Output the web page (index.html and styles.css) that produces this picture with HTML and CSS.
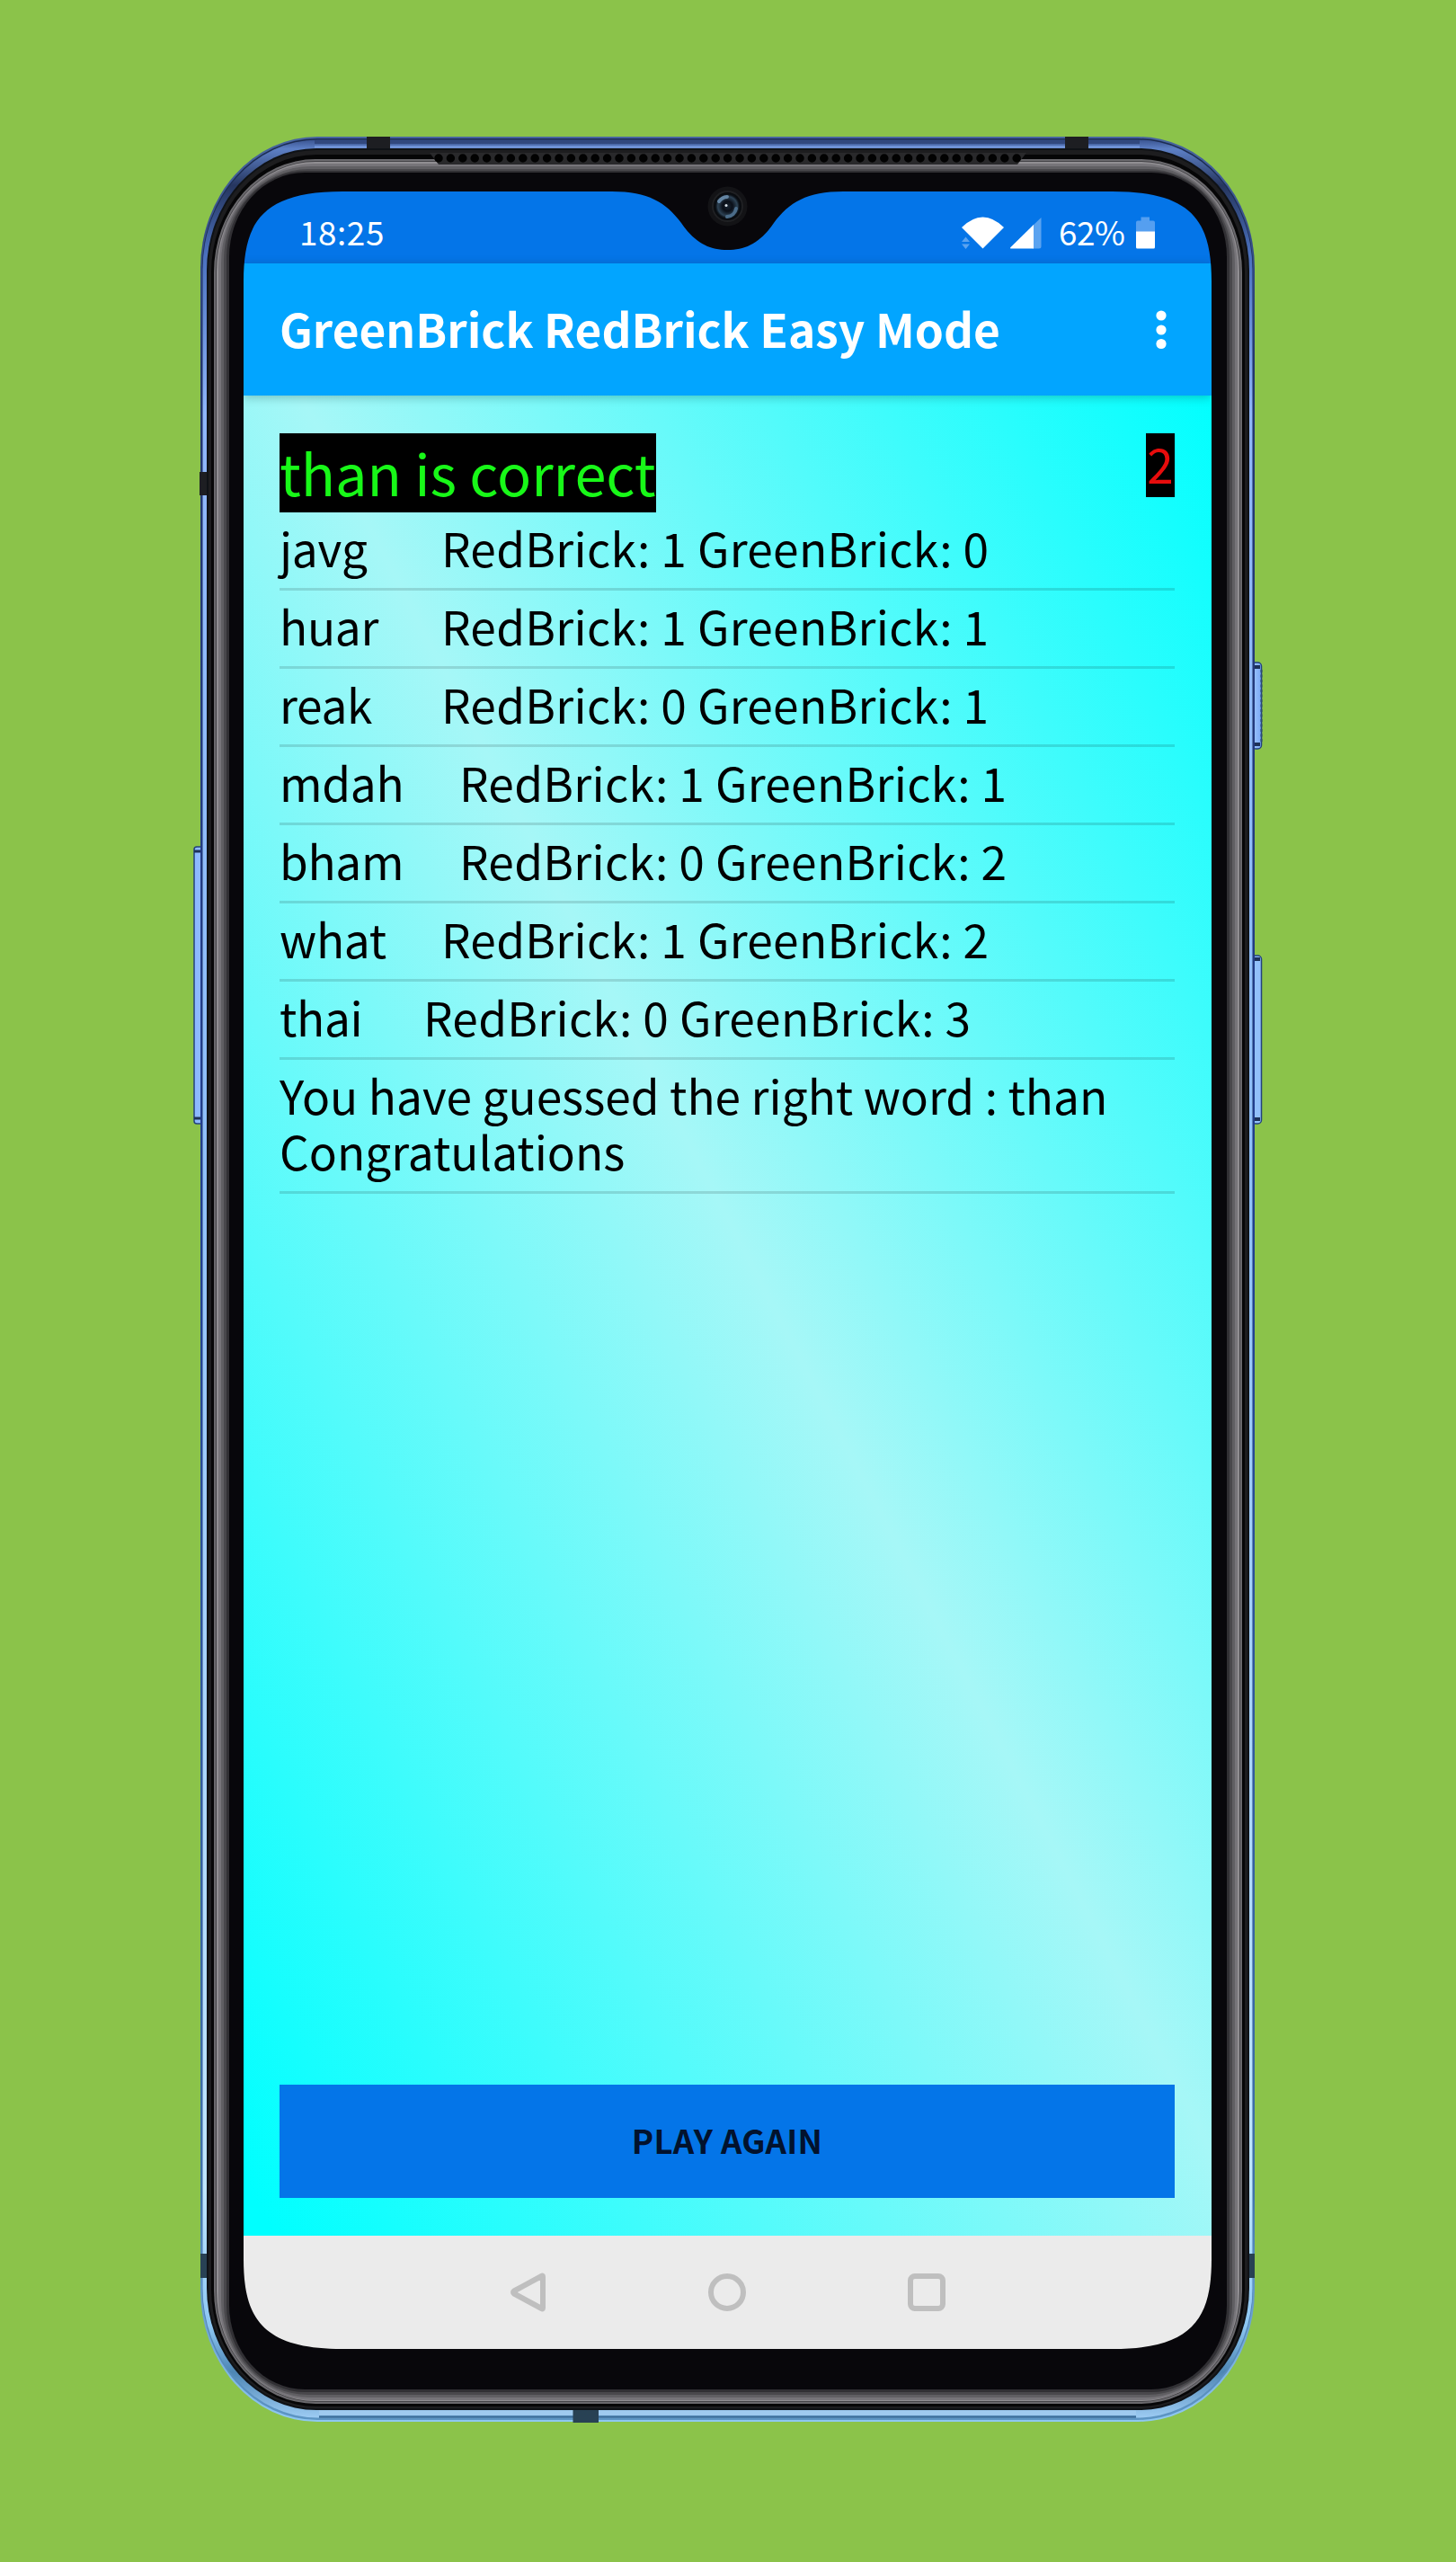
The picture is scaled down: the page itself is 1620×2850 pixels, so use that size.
FILE: index.html
```html
<!DOCTYPE html>
<html lang="en">
<head>
<meta charset="utf-8">
<title>GreenBrick RedBrick Easy Mode</title>
<link rel="stylesheet" href="styles.css">
</head>
<body>
<main class="phone">
  <svg class="frame" viewBox="210 140 1200 2570" aria-hidden="true">
    <defs>
      <linearGradient id="metal" x1="0" y1="0" x2="0" y2="1">
        <stop offset="0" stop-color="#3a5490"/>
        <stop offset=".004" stop-color="#5d80c6"/>
        <stop offset=".02" stop-color="#26365f"/>
        <stop offset=".05" stop-color="#4a70bd"/>
        <stop offset=".12" stop-color="#8fb6fb"/>
        <stop offset=".45" stop-color="#8fc0fa"/>
        <stop offset=".9" stop-color="#bfe6ff"/>
        <stop offset=".96" stop-color="#8cc6f2"/>
        <stop offset=".98" stop-color="#4d86b4"/>
        <stop offset="1" stop-color="#9ccbf3"/>
      </linearGradient>
      <linearGradient id="edge" x1="0" y1="0" x2="0" y2="1">
        <stop offset="0" stop-color="#47659f"/>
        <stop offset=".1" stop-color="#24356f"/>
        <stop offset=".5" stop-color="#213f92"/>
        <stop offset=".9" stop-color="#3f73aa"/>
        <stop offset="1" stop-color="#8fc8f2"/>
      </linearGradient>
      <linearGradient id="rim" x1="0" y1="0" x2="0" y2="1">
        <stop offset="0" stop-color="#1c2c52"/>
        <stop offset=".8" stop-color="#2a4a80"/>
        <stop offset="1" stop-color="#5d95c4"/>
      </linearGradient>
      <linearGradient id="key" x1="0" x2="1">
        <stop offset="0" stop-color="#9fc6ff"/>
        <stop offset="1" stop-color="#79a8f5"/>
      </linearGradient>
      <radialGradient id="lens">
        <stop offset="0" stop-color="#1a2634"/>
        <stop offset=".35" stop-color="#0a0f18"/>
        <stop offset=".7" stop-color="#2d4254"/>
        <stop offset=".85" stop-color="#0b1016"/>
        <stop offset="1" stop-color="#07080b"/>
      </radialGradient>
    </defs>

    <!-- side keys -->
    <rect x="216" y="942" width="11" height="308" rx="3" fill="#8db9ff" stroke="#23417e" stroke-width="1.500"/>
    <path d="M216 947h10M216 1244h10" stroke="#1d3158" stroke-width="3"/>
    <rect x="1393" y="737" width="10.500" height="96" rx="4" fill="url(#key)" stroke="#23417e" stroke-width="1.500"/>
    <path d="M1403.500 745v80" stroke="#2c4c74" stroke-width="2" stroke-dasharray="3 2.500"/>
    <path d="M1394 742h8M1394 828h8" stroke="#1d3158" stroke-width="4"/>
    <rect x="1393" y="1063" width="10.500" height="187" rx="4" fill="#92c0fa" stroke="#23417e" stroke-width="1.500"/>
    <path d="M1394 1067h8M1394 1245h8" stroke="#1d3158" stroke-width="4"/>

    <!-- metal band -->
    <rect x="223" y="152" width="1173" height="2542" rx="130" ry="146" fill="url(#edge)"/>
    <rect x="225" y="154" width="1169" height="2538" rx="128" ry="144" fill="url(#rim)"/>
    <rect x="225.500" y="155.500" width="1168" height="2534" rx="128" ry="144" fill="url(#metal)"/>
    <path d="M350 163.500H1268" stroke="#6f92d6" stroke-width="3"/>
    <path d="M350 158H1268" stroke="#31487e" stroke-width="4"/>
    <path d="M355 2688.500H1264" stroke="#3d6f9c" stroke-width="2.500"/>
    <path d="M355 2684H1264" stroke="#9fcaf0" stroke-width="5"/>

    <!-- antenna breaks -->
    <path d="M408 152h26v14h-26zM1185 152h26v14h-26zM222 525h9v26h-9z" fill="#1d1e22"/>
    <path d="M223 2507h9v27h-9zM1388 2507h8v27h-8zM637.500 2680h28.500v15h-28.500z" fill="#284154"/>

    <!-- dark bezel and its highlight -->
    <rect x="230" y="165" width="1160" height="2516" rx="122" ry="136" fill="#0f1216"/>
    <rect x="232" y="167" width="1156" height="2512" rx="120" ry="134" fill="#1d1d1f"/>
    <rect x="235" y="172" width="1150" height="2505" rx="117" ry="131" fill="#060607"/>
    <rect x="238" y="177" width="1144" height="2497" rx="113" ry="126" fill="#6a696d"/>
    <rect x="240" y="179" width="1140" height="2493" rx="111" ry="124" fill="#444347"/>
    <rect x="241" y="180" width="1138" height="2491" rx="110" ry="122" fill="#908e92"/>
    <rect x="243" y="182" width="1134" height="2488" rx="106" ry="116" fill="#77757a"/>
    <rect x="246" y="185" width="1128" height="2482" rx="100" ry="108" fill="#605f63"/>
    <rect x="249" y="188" width="1122" height="2476" rx="94" ry="102" fill="#49484c"/>
    <rect x="252" y="190" width="1116" height="2471" rx="88" ry="97" fill="#313034"/>
    <rect x="255" y="192" width="1110" height="2466" rx="84" ry="94" fill="#08070b"/>

    <!-- earpiece grille -->
    <path d="M478 170H1142L1132 183H488Z" fill="#29292b"/>
    <path d="M488 176H1132" stroke="#020202" stroke-width="9.500" stroke-linecap="round" stroke-dasharray="0 13.400"/>

    <!-- front camera -->
    <circle cx="809.500" cy="229.500" r="22" fill="#131316"/>
    <circle cx="809.500" cy="229.500" r="17.500" fill="#1f2023"/>
    <circle cx="809.500" cy="229.500" r="15.500" fill="url(#lens)"/>
    <path d="M800 224a12 12 0 0 1 9-5" stroke="#6485a3" stroke-width="4" fill="none" stroke-linecap="round"/>
    <path d="M809 241a11 11 0 0 0 10-9" stroke="#4b6c89" stroke-width="4" fill="none" stroke-linecap="round"/>
    <circle cx="808" cy="228.500" r="1.500" fill="#d5dee5"/>
  </svg>

  <section class="screen">
    <header class="status">
      <span class="time">18:25</span>
      <span class="indicators">
        <svg class="signal" viewBox="0 0 90 36" aria-hidden="true">
          <path d="M0 12Q23.500-11 47 12L23.500 35.500Z" fill="#fff"/>
          <path d="M0 28l4.500-5.500L9 28zM0 30.500h9L4.500 36z" fill="#5ba3f0"/>
          <path d="M88.500 1V33q0 2.500-2.500 2.500H79V10Z" fill="#5ba3f0"/>
          <path d="M80 9V35.500H54.500Q53.500 35 54.500 34Z" fill="#fff"/>
        </svg>
        <span class="percent">62%</span>
        <svg class="battery" viewBox="0 0 21 36" aria-hidden="true">
          <path d="M5.500 0.500h9.500v4h4q2 0 2 2V17H0V6.500q0-2 2-2h3.500z" fill="#559ff0"/>
          <path d="M0 16.500h21V34q0 1.500-1.500 1.500h-18Q0 35.500 0 34z" fill="#fff"/>
        </svg>
      </span>
    </header>

    <div class="appbar">
      <h1 class="title">GreenBrick RedBrick Easy Mode</h1>
      <svg class="more" viewBox="0 0 12 44" aria-hidden="true">
        <circle cx="6" cy="6" r="5.600"/><circle cx="6" cy="22" r="5.600"/><circle cx="6" cy="37.500" r="5.600"/>
      </svg>
    </div>

    <div class="game">
      <div class="summary">
        <span class="answer">than is correct</span>
        <span class="counter">2</span>
      </div>
      <ul class="guesses">
        <li class="guess"><span class="word">javg</span><span class="score">RedBrick: 1 GreenBrick: 0</span></li>
        <li class="guess"><span class="word">huar</span><span class="score">RedBrick: 1 GreenBrick: 1</span></li>
        <li class="guess"><span class="word">reak</span><span class="score">RedBrick: 0 GreenBrick: 1</span></li>
        <li class="guess"><span class="word word-wide">mdah</span><span class="score">RedBrick: 1 GreenBrick: 1</span></li>
        <li class="guess"><span class="word word-wide">bham</span><span class="score">RedBrick: 0 GreenBrick: 2</span></li>
        <li class="guess"><span class="word">what</span><span class="score">RedBrick: 1 GreenBrick: 2</span></li>
        <li class="guess"><span class="word word-narrow">thai</span><span class="score">RedBrick: 0 GreenBrick: 3</span></li>
        <li class="guess">You have guessed the right word : than<br>Congratulations</li>
      </ul>
      <button class="play" type="button">PLAY AGAIN</button>
    </div>

    <nav class="navbar">
      <svg class="nav-icon" viewBox="0 0 44 44" aria-hidden="true"><path d="M39 4.500V39.500Q39 41 37.500 40L7 23.500Q5 22 7 20.500L37.500 4Q39 3 39 4.500Z"/></svg>
      <svg class="nav-icon" viewBox="0 0 44 44" aria-hidden="true"><circle cx="22" cy="22" r="18"/></svg>
      <svg class="nav-icon" viewBox="0 0 44 44" aria-hidden="true"><rect x="4" y="4" width="36" height="36" rx="5"/></svg>
    </nav>
  </section>
</main>
</body>
</html>
```
FILE: styles.css
```css
* {
  box-sizing: border-box;
}

body {
  margin: 0;
  background: #8bc34a;
  font-family: "Noto Sans CJK SC", "Noto Sans", sans-serif;
  color: #000;
}

.phone {
  position: relative;
  width: 1620px;
  height: 2850px;
  padding: 213px 0 0 271px;
  overflow: hidden;
}

.frame {
  position: absolute;
  left: 210px;
  top: 140px;
  width: 1200px;
  height: 2570px;
}

.screen {
  position: relative;
  display: flex;
  flex-direction: column;
  width: 1077px;
  height: 2400px;
  clip-path: path("M0 100C0 35 20 0 110 0H410C450 0 470 12 487 35C502 57 518 65 538.5 65C559 65 575 57 590 35C607 12 627 0 667 0H967C1057 0 1077 35 1077 100V2300C1077 2365 1057 2400 967 2400H110C20 2400 0 2365 0 2300Z");
}

.status {
  display: flex;
  justify-content: space-between;
  height: 80px;
  padding: 0 63px 0 62px;
  background: #0475e8;
  color: #fff;
  font-size: 36.8px;
  line-height: 88px;
}

.time {
  letter-spacing: .6px;
}

.indicators {
  display: flex;
}

.signal {
  width: 90px;
  height: 36px;
  margin: 28px 18px 0 0;
}

.percent {
  width: 86px;
  letter-spacing: -.4px;
}

.battery {
  width: 21px;
  height: 36px;
  margin-top: 28px;
}

.appbar {
  position: relative;
  z-index: 1;
  display: flex;
  justify-content: space-between;
  align-items: center;
  height: 147px;
  padding: 0 50px 0 40px;
  background: #02a5ff;
  box-shadow: 0 2px 10px rgba(0, 60, 60, .3);
}

.title {
  margin: 0 0 3px;
  color: #fff;
  font-size: 51.4px;
  font-weight: 700;
  line-height: 142px;
  white-space: nowrap;
}

.more {
  width: 12px;
  height: 44px;
  fill: #fff;
}

.game {
  display: flex;
  flex-direction: column;
  height: 2047px;
  padding: 42px 41px 42px 40px;
  background: linear-gradient(62.6deg, #0ff 29px, #a6f7f7 999px, #0ff 1909px);
}

.summary {
  display: flex;
  justify-content: space-between;
  align-items: flex-start;
}

.answer {
  width: 419px;
  height: 88px;
  background: #000;
  color: #18f818;
  font-size: 63.1px;
  line-height: 86px;
  white-space: nowrap;
}

.counter {
  width: 32px;
  height: 71px;
  background: #000;
  color: #e80c0c;
  font-size: 53px;
  line-height: 66px;
  text-align: center;
}

.guesses {
  flex: 1;
  margin: 0;
  padding: 0;
  list-style: none;
}

.guess {
  padding: 8px 0 14px;
  border-bottom: 3px solid rgba(0, 0, 0, .13);
  font-size: 51.4px;
  line-height: 62px;
  white-space: nowrap;
}

.word {
  display: inline-block;
  width: 180px;
  letter-spacing: -.3px;
}

.word-wide {
  width: 200px;
}

.word-narrow {
  width: 160px;
}

.score {
  letter-spacing: .3px;
}

.play {
  height: 126px;
  padding: 0 0 2px;
  border: 0;
  background: #0475e8;
  color: #02122d;
  font: 700 36.6px/124px "Noto Sans CJK SC", "Noto Sans", sans-serif;
  letter-spacing: .3px;
}

.navbar {
  display: flex;
  justify-content: center;
  gap: 178px;
  height: 126px;
  padding: 41px 2px 0 0;
  background: #ebebeb;
}

.nav-icon {
  width: 44px;
  height: 44px;
  fill: none;
  stroke: #bfbfbf;
  stroke-width: 6;
  stroke-linejoin: round;
}
```
